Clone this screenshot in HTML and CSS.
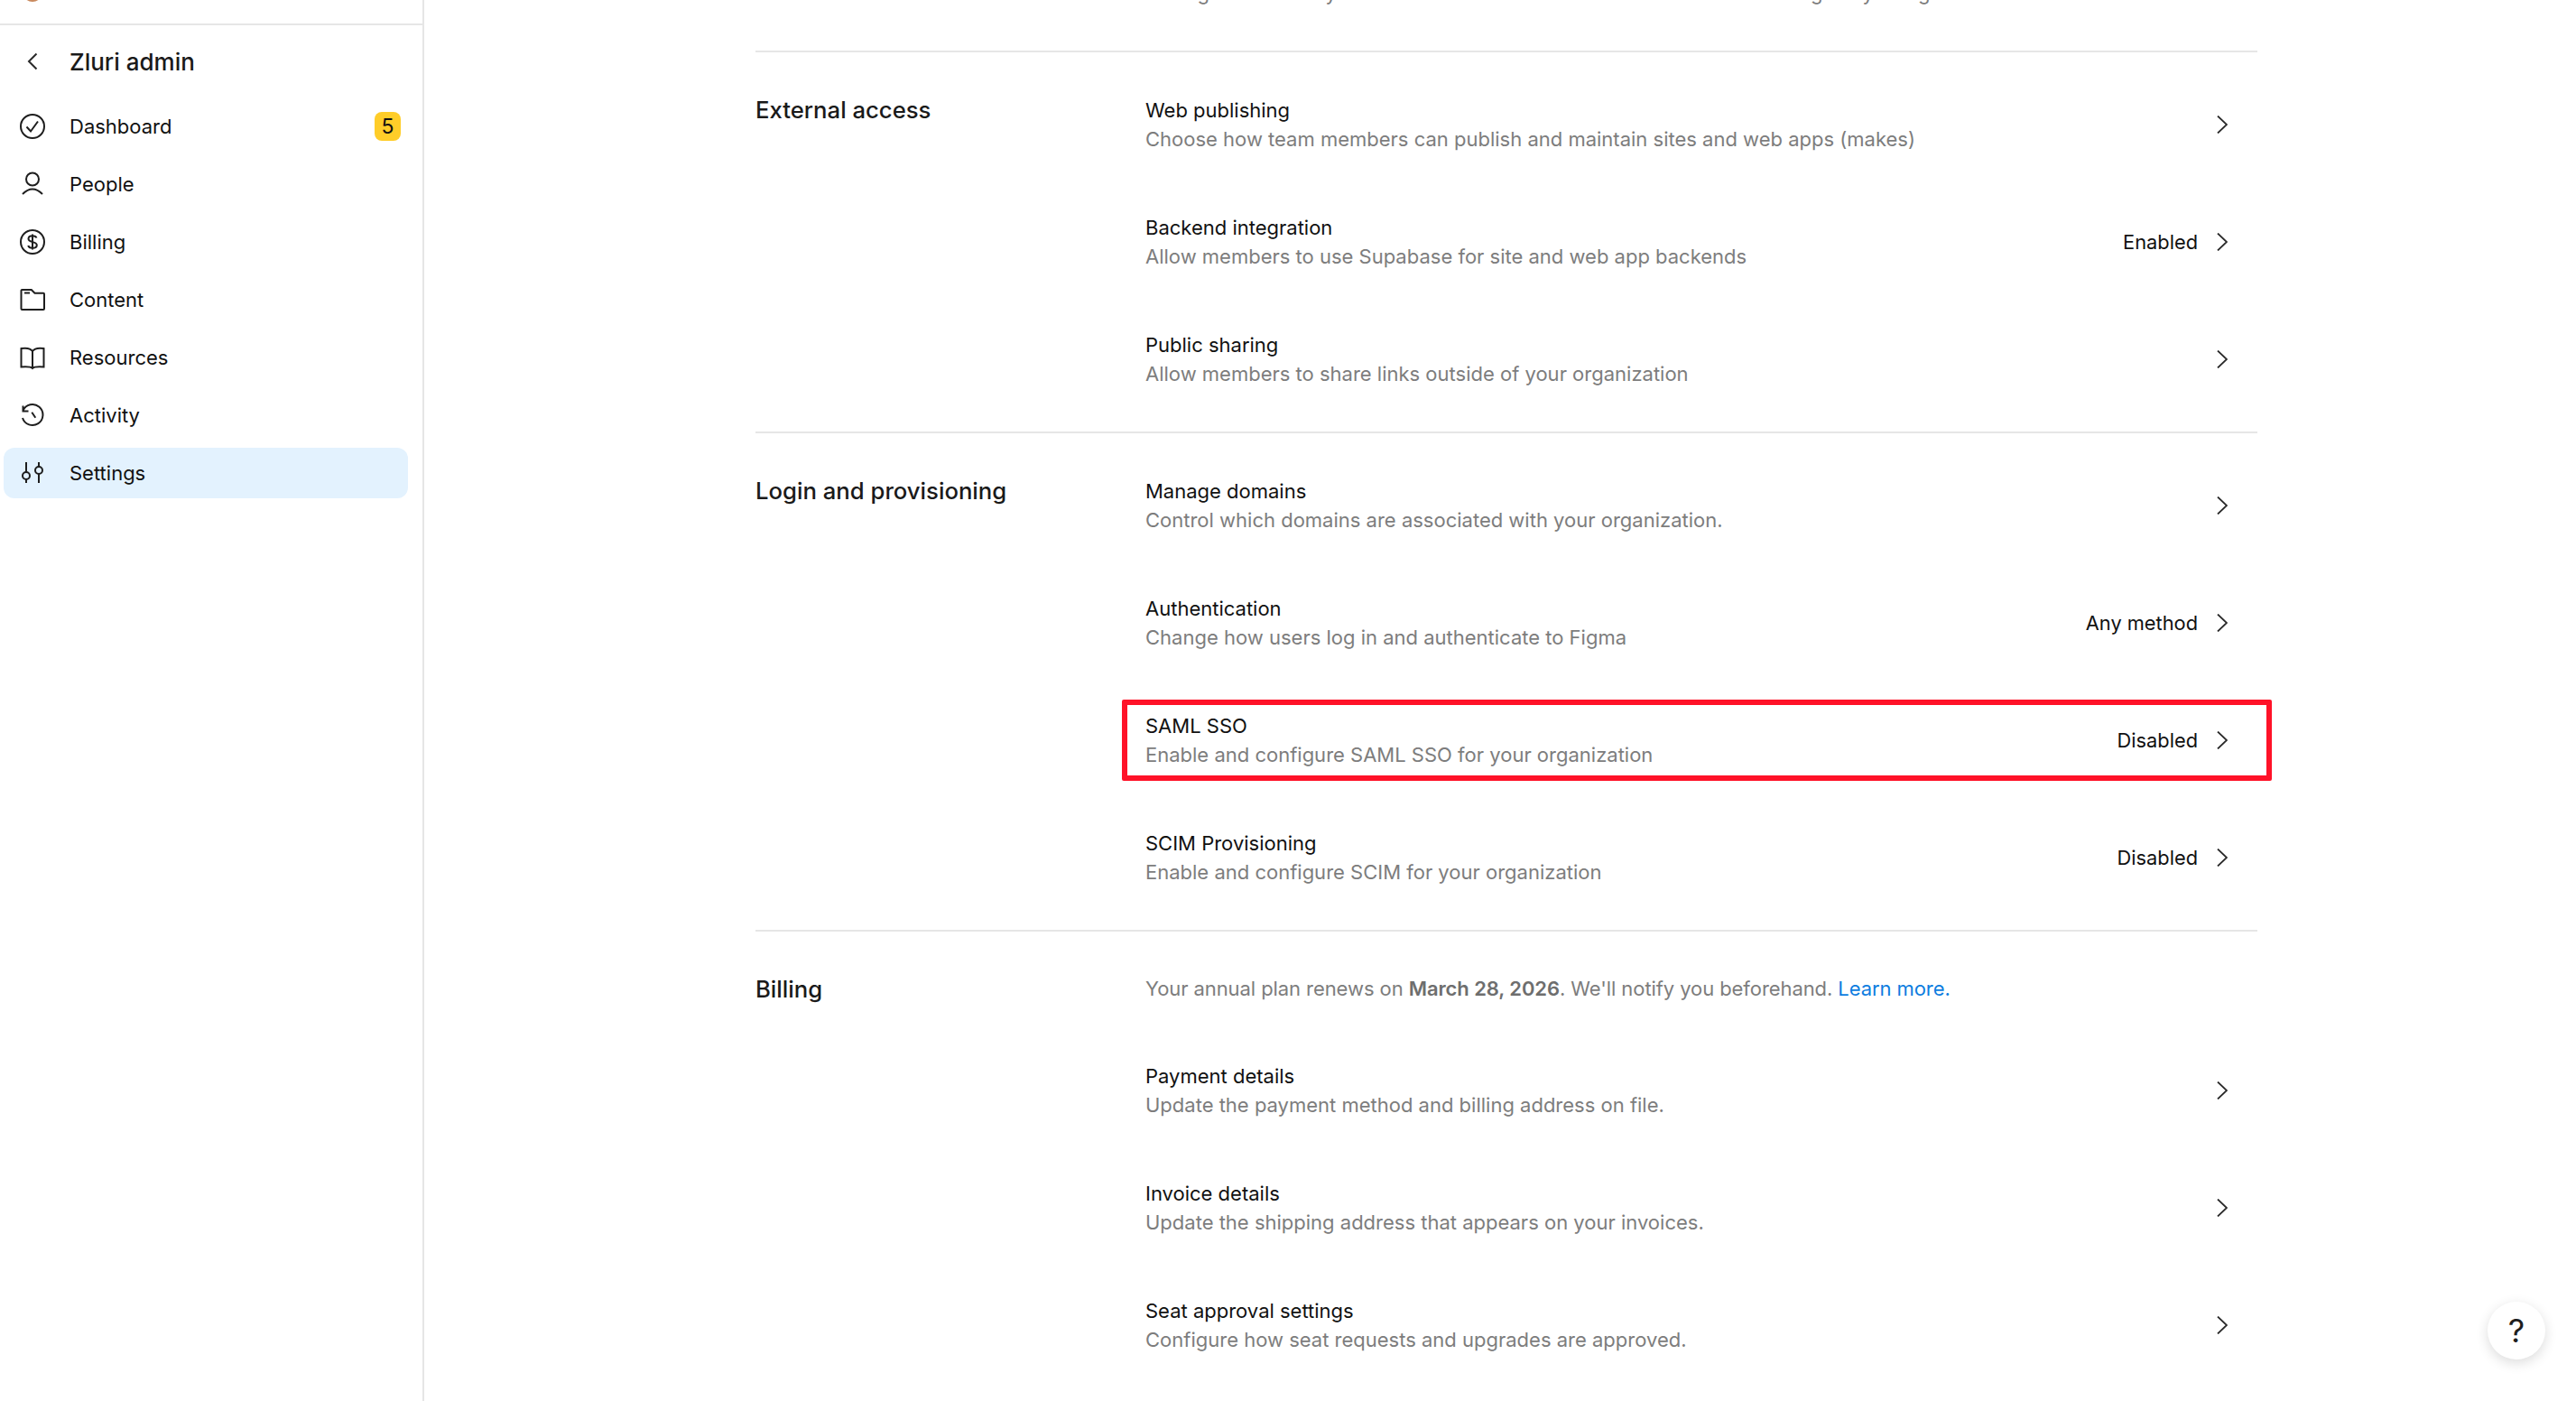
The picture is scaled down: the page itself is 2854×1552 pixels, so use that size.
FILE: index.html
```html
<!DOCTYPE html>
<html lang="en">
<head>
<meta charset="utf-8">
<title>Zluri admin settings</title>
<link rel="stylesheet" href="styles.css">
</head>
<body>
<div class="page">
  <aside class="sidebar">
    <div class="topbar"><span class="avatar"></span></div>
    <div class="side-head">
      <svg class="back" viewBox="0 0 12 20"><path d="M10.5 1.500 2 10l8.500 8.500"/></svg>
      <span class="side-title">Zluri admin</span>
    </div>
    <nav class="nav">
      <a class="nav-item">
        <svg class="ico" viewBox="0 0 28 28"><circle cx="14" cy="14" r="13"/><path d="M7.500 14.500 12 19.500 20 8.500"/></svg>
        <span class="nav-label">Dashboard</span><span class="badge">5</span>
      </a>
      <a class="nav-item">
        <svg class="ico" viewBox="0 0 28 28"><circle cx="14" cy="8.500" r="7"/><path d="M3 25Q14 14 25 25"/></svg>
        <span class="nav-label">People</span>
      </a>
      <a class="nav-item">
        <svg class="ico" viewBox="0 0 28 28"><circle cx="14" cy="14" r="13"/><path d="M14 5.500v17M18.500 9.500c-.5-1.500-2.300-2.300-4.500-2.300-2.600 0-4.500 1.300-4.500 3.400 0 4.800 9.300 2.300 9.300 6.900 0 2-2 3.300-4.800 3.300-2.400 0-4.300-1-4.800-2.800"/></svg>
        <span class="nav-label">Billing</span>
      </a>
      <a class="nav-item">
        <svg class="ico" viewBox="0 0 28 28"><path d="M2.500 3h10.300l3.700 3.700H26a1 1 0 0 1 1 1V24a1 1 0 0 1-1 1H2.500a1 1 0 0 1-1-1V4a1 1 0 0 1 1-1ZM5 6.500h6"/></svg>
        <span class="nav-label">Content</span>
      </a>
      <a class="nav-item">
        <svg class="ico" viewBox="0 0 28 28"><path d="M14 7C12 4 8 3 1.500 4v20.500C8 24 12 24 14 26c2-2 6-2 12.500-1.500V4C20 3 16 4 14 7Zm0 0v19"/></svg>
        <span class="nav-label">Resources</span>
      </a>
      <a class="nav-item">
        <svg class="ico" viewBox="0 0 28 28"><path d="M3.500 8.800A11.500 11.500 0 1 1 3 17M3.500 3.500V9.500H9.500M13.300 10.700 17.300 16.700"/></svg>
        <span class="nav-label">Activity</span>
      </a>
      <a class="nav-item active">
        <svg class="ico" viewBox="0 0 28 28"><path d="M7 2v11M7 21v4M21 2v5M21 15v10"/><circle cx="7" cy="17" r="4"/><circle cx="21" cy="11" r="4"/></svg>
        <span class="nav-label">Settings</span>
      </a>
    </nav>
  </aside>

  <main class="main">
    <section class="section">
      <div class="sec-title"></div>
      <div class="rows">
        <div class="row"><div class="row-text"><div class="row-name">Organization</div><div class="row-desc">Manage contents by team and restrict what members can see and to sign any using</div></div></div>
      </div>
    </section>

    <section class="section">
      <h2 class="sec-title">External access</h2>
      <div class="rows">
        <div class="row"><div class="row-text"><div class="row-name">Web publishing</div><div class="row-desc">Choose how team members can publish and maintain sites and web apps (makes)</div></div><svg class="chev" viewBox="0 0 12 20"><path d="M1 .5 11 10 1 19.500"/></svg></div>
        <div class="row"><div class="row-text"><div class="row-name">Backend integration</div><div class="row-desc">Allow members to use Supabase for site and web app backends</div></div><span class="row-value">Enabled</span><svg class="chev" viewBox="0 0 12 20"><path d="M1 .5 11 10 1 19.500"/></svg></div>
        <div class="row"><div class="row-text"><div class="row-name">Public sharing</div><div class="row-desc">Allow members to share links outside of your organization</div></div><svg class="chev" viewBox="0 0 12 20"><path d="M1 .5 11 10 1 19.500"/></svg></div>
      </div>
    </section>

    <section class="section">
      <h2 class="sec-title">Login and provisioning</h2>
      <div class="rows">
        <div class="row"><div class="row-text"><div class="row-name">Manage domains</div><div class="row-desc">Control which domains are associated with your organization.</div></div><svg class="chev" viewBox="0 0 12 20"><path d="M1 .5 11 10 1 19.500"/></svg></div>
        <div class="row"><div class="row-text"><div class="row-name">Authentication</div><div class="row-desc">Change how users log in and authenticate to Figma</div></div><span class="row-value">Any method</span><svg class="chev" viewBox="0 0 12 20"><path d="M1 .5 11 10 1 19.500"/></svg></div>
        <div class="row marked"><div class="row-text"><div class="row-name">SAML SSO</div><div class="row-desc">Enable and configure SAML SSO for your organization</div></div><span class="row-value">Disabled</span><svg class="chev" viewBox="0 0 12 20"><path d="M1 .5 11 10 1 19.500"/></svg></div>
        <div class="row"><div class="row-text"><div class="row-name">SCIM Provisioning</div><div class="row-desc">Enable and configure SCIM for your organization</div></div><span class="row-value">Disabled</span><svg class="chev" viewBox="0 0 12 20"><path d="M1 .5 11 10 1 19.500"/></svg></div>
      </div>
    </section>

    <section class="section last">
      <h2 class="sec-title">Billing</h2>
      <div class="rows">
        <p class="notice">Your annual plan renews on <strong>March 28, 2026</strong>. We'll notify you beforehand. <a class="link">Learn more.</a></p>
        <div class="row"><div class="row-text"><div class="row-name">Payment details</div><div class="row-desc">Update the payment method and billing address on file.</div></div><svg class="chev" viewBox="0 0 12 20"><path d="M1 .5 11 10 1 19.500"/></svg></div>
        <div class="row"><div class="row-text"><div class="row-name">Invoice details</div><div class="row-desc">Update the shipping address that appears on your invoices.</div></div><svg class="chev" viewBox="0 0 12 20"><path d="M1 .5 11 10 1 19.500"/></svg></div>
        <div class="row"><div class="row-text"><div class="row-name">Seat approval settings</div><div class="row-desc">Configure how seat requests and upgrades are approved.</div></div><svg class="chev" viewBox="0 0 12 20"><path d="M1 .5 11 10 1 19.500"/></svg></div>
      </div>
    </section>
  </main>
</div>
<button class="help" type="button">?</button>
</body>
</html>
```
FILE: styles.css
```css
* { box-sizing: border-box; }
html, body { margin: 0; height: 100%; overflow: hidden; background: #fff; }
body { font-family: Inter, "Liberation Sans", sans-serif; color: #1a1a1a; font-size: 22px; }
.page { display: flex; height: 1552px; overflow: hidden; }

.sidebar { width: 470px; flex: none; border-right: 2px solid #e6e6e6; }
.topbar { height: 28px; border-bottom: 2px solid #e6e6e6; overflow: hidden; }
.avatar { display: block; width: 22px; height: 22px; margin: -20px 0 0 25px; border-radius: 50%; background: #c98a5e; }
.side-head { height: 80px; display: flex; align-items: center; padding-left: 30px; }
.back { width: 12px; height: 20px; margin-right: 35px; fill: none; stroke: #2a2a2a; stroke-width: 2; }
.side-title { font-size: 26px; font-weight: 500; }
.nav { display: flex; flex-direction: column; gap: 8px; padding: 4px 0 0 4px; width: 452px; }
.nav-item { height: 56px; display: flex; align-items: center; padding: 0 8px 0 18px; border-radius: 12px; color: #111; }
.nav-item.active { background: #e3f2fe; }
.ico { width: 28px; height: 28px; flex: none; margin-right: 27px; fill: none; stroke: #1e1e1e; stroke-width: 2; }
.nav-label { flex: 1; font-size: 22px; }
.badge { width: 29px; height: 32px; border-radius: 8px; background: #ffcd29; display: flex; align-items: center; justify-content: center; font-size: 23px; }

.main { width: 1664px; margin: -104px 0 0 367px; flex: none; }
.section { display: flex; border-bottom: 2px solid #e6e6e6; padding: 15px 0; }
.section.last { border-bottom: 0; }
.sec-title { width: 432px; flex: none; margin: 0; font-size: 25.700px; font-weight: 500; line-height: 32px; padding-top: 33px; }
.rows { flex: 1; min-width: 0; }
.row { position: relative; height: 130px; display: flex; align-items: center; padding-right: 33px; }
.row-text { flex: 1; min-width: 0; }
.row-name { font-size: 22px; line-height: 32px; color: #111; }
.row-desc { font-size: 22px; line-height: 32px; color: #7d7d7d; }
.row-value { font-size: 21.800px; color: #111; margin-right: 21px; }
.chev { width: 12px; height: 20px; flex: none; fill: none; stroke: #2a2a2a; stroke-width: 1.800; }
.marked::after { content: ""; position: absolute; left: -26px; right: -16px; top: 20px; bottom: 20px; border: 6px solid #ff1228; border-radius: 2px; }
.notice { margin: 0; height: 96px; line-height: 97px; color: #7d7d7d; font-size: 22px; letter-spacing: -0.08px; white-space: nowrap; }
.notice strong { font-weight: 600; color: #6e6e6e; }
.link { color: #0d7de0; }

.help { position: absolute; left: 2756px; top: 1442px; width: 64px; height: 64px; border: 0; border-radius: 50%; background: #fff; box-shadow: 0 4px 14px rgba(0,0,0,.14); font: 400 36px Inter, sans-serif; color: #1e1e1e; padding: 0; }
```
